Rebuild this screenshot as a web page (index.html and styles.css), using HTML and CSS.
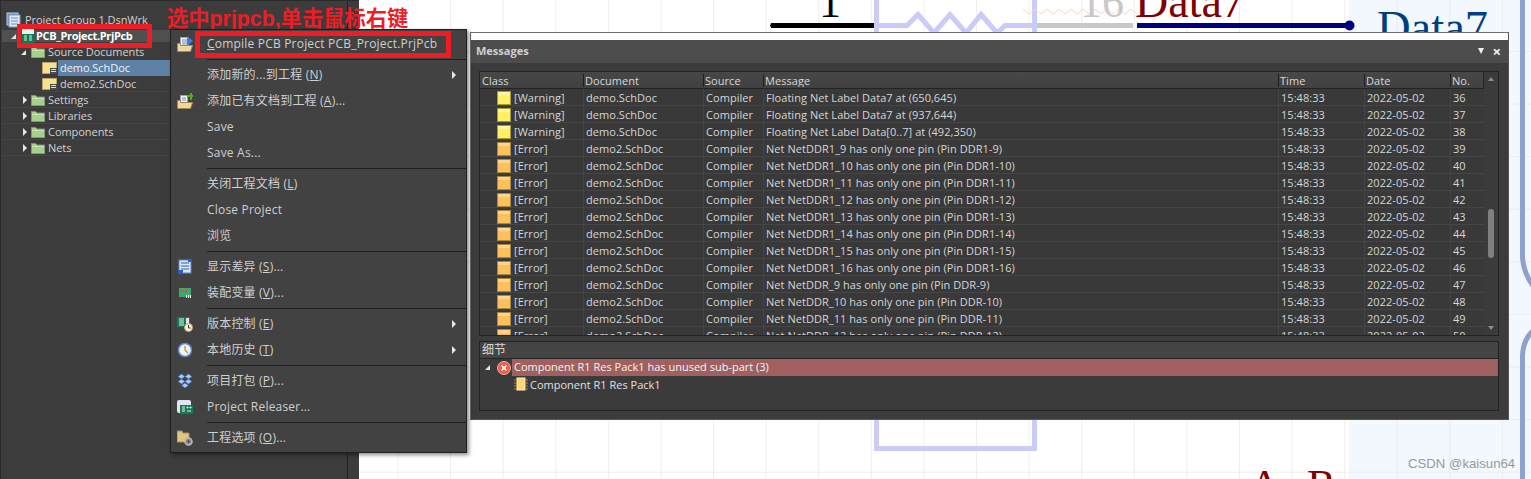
FILE: index.html
```html
<!DOCTYPE html>
<html lang="zh">
<head>
<meta charset="utf-8">
<title>Messages</title>
<link rel="stylesheet" href="styles.css">
</head>
<body>
<svg class="defs" width="0" height="0" aria-hidden="true">
  <defs>
    <symbol id="folder" viewBox="0 0 14 12">
      <path d="M0.5 11.5V1.5h4l1.5 1.5h7.5v8.5z" fill="#a7d28d" stroke="#7f9c72"/>
      <path d="M1 4h12v1H1z" fill="#c9e6b6"/>
    </symbol>
    <symbol id="doc" viewBox="0 0 15 12">
      <rect x="0.5" y="0.5" width="14" height="11" fill="#f8e08e" stroke="#b8a468"/>
      <rect x="8" y="6" width="7" height="6" fill="#4a4a4a"/>
      <path d="M9 7.5h5M9 9.5h5" stroke="#ddd"/>
    </symbol>
    <symbol id="warn" viewBox="0 0 14 14">
      <rect x="0.5" y="0.5" width="13" height="13" fill="#fff066" stroke="#a89a28"/>
      <rect x="1" y="1" width="12" height="3" fill="#fff7a0"/>
    </symbol>
    <symbol id="err" viewBox="0 0 14 14">
      <rect x="0.5" y="0.5" width="13" height="13" fill="#fcc05c" stroke="#a8843c"/>
      <rect x="1" y="1" width="12" height="3" fill="#fdd58c"/>
    </symbol>
  </defs>
</svg>

<div class="app">
  <aside class="panel">
    <div class="tree">
      <div class="node lv0">
        <svg class="ico-group" viewBox="0 0 16 16"><rect x="1" y="1" width="11" height="12" fill="#6f8fc0" stroke="#b9cbe6"/><rect x="3" y="3" width="11" height="12" fill="#dfe7f3" stroke="#7f9ac4"/><path d="M5 6h7M5 9h7M5 12h7" stroke="#6f8fc0"/></svg>
        <span class="label">Project Group 1.DsnWrk</span>
      </div>
      <div class="node lv1 project">
        <span class="tri-open"></span>
        <svg class="ico-pcb" viewBox="0 0 12 14"><rect x="0" y="0" width="12" height="14" fill="#eef3ee"/><rect x="0" y="5" width="12" height="9" fill="#0f7c55"/><path d="M2 7h3M2 9h3M2 11h3M7 7h3M7 9h3M7 11h3" stroke="#d8efd8"/></svg>
        <span class="label">PCB_Project.PrjPcb</span>
      </div>
      <div class="node lv2">
        <span class="tri-open"></span>
        <svg class="ico-folder"><use href="#folder"/></svg>
        <span class="label">Source Documents</span>
      </div>
      <div class="node lv3 active">
        <svg class="ico-doc"><use href="#doc"/></svg>
        <span class="label">demo.SchDoc</span>
      </div>
      <div class="node lv3 lined">
        <svg class="ico-doc"><use href="#doc"/></svg>
        <span class="label">demo2.SchDoc</span>
      </div>
      <div class="node lv2 lined">
        <span class="tri-closed"></span>
        <svg class="ico-folder"><use href="#folder"/></svg>
        <span class="label">Settings</span>
      </div>
      <div class="node lv2 lined">
        <span class="tri-closed"></span>
        <svg class="ico-folder"><use href="#folder"/></svg>
        <span class="label">Libraries</span>
      </div>
      <div class="node lv2 lined">
        <span class="tri-closed"></span>
        <svg class="ico-folder"><use href="#folder"/></svg>
        <span class="label">Components</span>
      </div>
      <div class="node lv2 lined">
        <span class="tri-closed"></span>
        <svg class="ico-folder"><use href="#folder"/></svg>
        <span class="label">Nets</span>
      </div>
    </div>
  </aside>

  <main class="canvas">
    <svg class="sheet" width="1172" height="479" viewBox="359 0 1172 479">
      <rect x="1349" y="0" width="182" height="479" fill="#e4eefc" opacity="0.45"/>
      <path d="M771 25.5H874" stroke="#000" stroke-width="5"/>
      <path d="M770 25.5h4M771.5 23.5v4" stroke="#000" stroke-width="1.5"/>
      <path d="M876.5 -5V448.5H1034.5V-5" fill="none" stroke="#c9cbf9" stroke-width="5"/>
      <path d="M879 25.5H907L918 14.5L934 33L950 14.5L966 33L981 14.5L997 33L1005 25.5H1032" fill="none" stroke="#c9cbf9" stroke-width="5"/>
      <path d="M1023 9l6 5 6-5 6 5 6-5 6 5 6-5 6 5 6-5 6 5 6-5 6 5 6-5 6 5 6-5 6 5 6-5 6 5 6-5 6 5" fill="none" stroke="#fbd6c4"/>
      <path d="M1037 25.5H1133" stroke="#c8c8c8" stroke-width="5"/>
      <path d="M1137 25.5H1350" stroke="#00007f" stroke-width="5"/>
      <circle cx="1349.5" cy="25.5" r="5" fill="#00007f"/>
      <text class="sch sch-black" x="819" y="17">1</text>
      <text class="sch sch-gray" x="1080" y="17">16</text>
      <text class="sch sch-red sch-data" x="1135" y="17">Data7</text>
      <text class="sch sch-blue" x="1377" y="43">Data7</text>
      <text class="sch sch-red" x="1249" y="500">A</text>
      <text class="sch sch-red" x="1307" y="500">R</text>
      <path d="M1522.5 -5V258Q1524 275 1536 290" fill="none" stroke="#8f9fd0" stroke-width="5"/>
      <path d="M1536 328Q1523 338 1522.5 356V484" fill="none" stroke="#8f9fd0" stroke-width="5"/>
    </svg>
  </main>

  <div class="hint">选中prjpcb,单击鼠标右键</div>
  <div class="redbox box-project"></div>
  <div class="watermark">CSDN @kaisun64</div>

  <nav class="menu">
    <div class="item">
      <svg class="mi" viewBox="0 0 16 16"><rect x="3.5" y="1.5" width="8" height="9" fill="#f4f6fa" stroke="#8fa3c4"/><path d="M5 4h5M5 6h5M5 8h5" stroke="#7a8aa8"/><path d="M10 0l6 5-6 5z" fill="#3c7fe0"/><path d="M0.5 15.5V7.5h3v2h12l-2 6z" fill="#f0d89c" stroke="#a68b55"/></svg>
      <span class="text"><u>C</u>ompile PCB Project PCB_Project.PrjPcb</span>
    </div>
    <div class="sep"></div>
    <div class="item">
      <span class="mi"></span>
      <span class="text">添加新的...到工程 (<u>N</u>)</span>
      <span class="sub"></span>
    </div>
    <div class="item">
      <svg class="mi" viewBox="0 0 16 16"><rect x="3.5" y="2.5" width="7" height="8" fill="#f4f6fa" stroke="#8fa3c4"/><path d="M5 5h4M5 7h4" stroke="#7a8aa8"/><path d="M0.5 15.5V7.5h3v2h12l-2 6z" fill="#f0d89c" stroke="#a68b55"/><path d="M10 2h3V0h2v2h1v2h-1v3h-2V4h-3z" fill="#4fb01f"/></svg>
      <span class="text">添加已有文档到工程 (<u>A</u>)...</span>
    </div>
    <div class="item"><span class="mi"></span><span class="text">Save</span></div>
    <div class="item"><span class="mi"></span><span class="text">Save As...</span></div>
    <div class="sep"></div>
    <div class="item"><span class="mi"></span><span class="text">关闭工程文档 (<u>L</u>)</span></div>
    <div class="item"><span class="mi"></span><span class="text">Close Project</span></div>
    <div class="item"><span class="mi"></span><span class="text">浏览</span></div>
    <div class="sep"></div>
    <div class="item">
      <svg class="mi" viewBox="0 0 16 16"><rect x="2" y="1" width="12" height="13" fill="#dbe6f6" stroke="#5b86c8"/><path d="M4 4h8M4 7h8M4 10h8" stroke="#2d5fb0"/><path d="M1 11h5v3H1z" fill="#1f62d0"/><path d="M11 0h4v3h-4z" fill="#1f62d0"/></svg>
      <span class="text">显示差异 (<u>S</u>)...</span>
    </div>
    <div class="item">
      <svg class="mi" viewBox="0 0 16 16"><rect x="2" y="3" width="12" height="9" fill="#3fa86c"/><path d="M4 5l2 2M6 5L4 7M8 5l2 2M10 5L8 7" stroke="#e04a3a"/><path d="M9 10h1v3H9zM11 10h1v3h-1zM13 10h1v3h-1z" fill="#e8f5e8"/></svg>
      <span class="text">装配变量 (<u>V</u>)...</span>
    </div>
    <div class="sep"></div>
    <div class="item">
      <svg class="mi" viewBox="0 0 16 16"><rect x="0" y="1" width="13" height="10" fill="#0f7c55"/><path d="M2 3h5M2 5h5M2 7h5M2 9h5" stroke="#e8f5e8"/><rect x="9" y="2" width="3" height="6" fill="#e8e8e8"/><circle cx="11.5" cy="11.5" r="4" fill="#f2f6fc" stroke="#d49b35"/><path d="M11.5 9v3h2" stroke="#333" fill="none"/></svg>
      <span class="text">版本控制 (<u>E</u>)</span>
      <span class="sub"></span>
    </div>
    <div class="item">
      <svg class="mi" viewBox="0 0 16 16"><circle cx="8" cy="8" r="6.5" fill="#eef2fa" stroke="#5f8ad0" stroke-width="1.5"/><path d="M8 4v4l3 3" stroke="#d49b35" stroke-width="1.5" fill="none"/></svg>
      <span class="text">本地历史 (<u>T</u>)</span>
      <span class="sub"></span>
    </div>
    <div class="sep"></div>
    <div class="item">
      <svg class="mi" viewBox="0 0 16 16"><path d="M4.5 1L1 3.5 4.5 6 8 3.5zM11.5 1L8 3.5 11.5 6 15 3.5zM4.5 6L1 8.5 4.5 11 8 8.5zM11.5 6L8 8.5 11.5 11 15 8.5zM8 10l-3.5 2.5L8 15l3.5-2.5z" fill="#a9c8f2" stroke="#2c66cc" stroke-width="0.6"/></svg>
      <span class="text">项目打包 (<u>P</u>)...</span>
    </div>
    <div class="item">
      <svg class="mi" viewBox="0 0 16 16"><rect x="0" y="1" width="14" height="13" rx="2" fill="#dfe6f2"/><rect x="3" y="6" width="13" height="9" fill="#0f7c55"/><path d="M5 8h3M5 10h3M5 12h3M10 8h1v1h-1zM13 8h1v1h-1zM10 12h4" stroke="#e8f5e8"/></svg>
      <span class="text">Project Releaser...</span>
    </div>
    <div class="sep"></div>
    <div class="item">
      <svg class="mi" viewBox="0 0 16 16"><path d="M0 12V1h5l1 2h6v9z" fill="#e3c583" stroke="#a68b55"/><circle cx="11.5" cy="11.5" r="3.5" fill="#888" stroke="#bbb" stroke-width="1.5"/><circle cx="11.5" cy="11.5" r="1" fill="#333"/></svg>
      <span class="text">工程选项 (<u>O</u>)...</span>
    </div>
    <div class="redbox box-compile"></div>
  </nav>

  <section class="messages">
    <div class="whitebar"></div>
    <header class="title">
      <span class="title-text">Messages</span>
      <span class="title-drop"></span>
      <span class="title-close">×</span>
    </header>
    <div class="body">
      <div class="list">
        <div class="table">
          <div class="row head">
            <span class="cell c-class">Class</span><span class="cell">Document</span><span class="cell">Source</span><span class="cell">Message</span><span class="cell">Time</span><span class="cell">Date</span><span class="cell">No.</span>
          </div>
          <div class="row"><span class="cell kind"><svg class="flag"><use href="#warn"/></svg>[Warning]</span><span class="cell">demo.SchDoc</span><span class="cell">Compiler</span><span class="cell">Floating Net Label Data7 at (650,645)</span><span class="cell">15:48:33</span><span class="cell">2022-05-02</span><span class="cell">36</span></div>
          <div class="row"><span class="cell kind"><svg class="flag"><use href="#warn"/></svg>[Warning]</span><span class="cell">demo.SchDoc</span><span class="cell">Compiler</span><span class="cell">Floating Net Label Data7 at (937,644)</span><span class="cell">15:48:33</span><span class="cell">2022-05-02</span><span class="cell">37</span></div>
          <div class="row"><span class="cell kind"><svg class="flag"><use href="#warn"/></svg>[Warning]</span><span class="cell">demo.SchDoc</span><span class="cell">Compiler</span><span class="cell">Floating Net Label Data[0..7] at (492,350)</span><span class="cell">15:48:33</span><span class="cell">2022-05-02</span><span class="cell">38</span></div>
          <div class="row"><span class="cell kind"><svg class="flag"><use href="#err"/></svg>[Error]</span><span class="cell">demo2.SchDoc</span><span class="cell">Compiler</span><span class="cell">Net NetDDR1_9 has only one pin (Pin DDR1-9)</span><span class="cell">15:48:33</span><span class="cell">2022-05-02</span><span class="cell">39</span></div>
          <div class="row"><span class="cell kind"><svg class="flag"><use href="#err"/></svg>[Error]</span><span class="cell">demo2.SchDoc</span><span class="cell">Compiler</span><span class="cell">Net NetDDR1_10 has only one pin (Pin DDR1-10)</span><span class="cell">15:48:33</span><span class="cell">2022-05-02</span><span class="cell">40</span></div>
          <div class="row"><span class="cell kind"><svg class="flag"><use href="#err"/></svg>[Error]</span><span class="cell">demo2.SchDoc</span><span class="cell">Compiler</span><span class="cell">Net NetDDR1_11 has only one pin (Pin DDR1-11)</span><span class="cell">15:48:33</span><span class="cell">2022-05-02</span><span class="cell">41</span></div>
          <div class="row"><span class="cell kind"><svg class="flag"><use href="#err"/></svg>[Error]</span><span class="cell">demo2.SchDoc</span><span class="cell">Compiler</span><span class="cell">Net NetDDR1_12 has only one pin (Pin DDR1-12)</span><span class="cell">15:48:33</span><span class="cell">2022-05-02</span><span class="cell">42</span></div>
          <div class="row"><span class="cell kind"><svg class="flag"><use href="#err"/></svg>[Error]</span><span class="cell">demo2.SchDoc</span><span class="cell">Compiler</span><span class="cell">Net NetDDR1_13 has only one pin (Pin DDR1-13)</span><span class="cell">15:48:33</span><span class="cell">2022-05-02</span><span class="cell">43</span></div>
          <div class="row"><span class="cell kind"><svg class="flag"><use href="#err"/></svg>[Error]</span><span class="cell">demo2.SchDoc</span><span class="cell">Compiler</span><span class="cell">Net NetDDR1_14 has only one pin (Pin DDR1-14)</span><span class="cell">15:48:33</span><span class="cell">2022-05-02</span><span class="cell">44</span></div>
          <div class="row"><span class="cell kind"><svg class="flag"><use href="#err"/></svg>[Error]</span><span class="cell">demo2.SchDoc</span><span class="cell">Compiler</span><span class="cell">Net NetDDR1_15 has only one pin (Pin DDR1-15)</span><span class="cell">15:48:33</span><span class="cell">2022-05-02</span><span class="cell">45</span></div>
          <div class="row"><span class="cell kind"><svg class="flag"><use href="#err"/></svg>[Error]</span><span class="cell">demo2.SchDoc</span><span class="cell">Compiler</span><span class="cell">Net NetDDR1_16 has only one pin (Pin DDR1-16)</span><span class="cell">15:48:33</span><span class="cell">2022-05-02</span><span class="cell">46</span></div>
          <div class="row"><span class="cell kind"><svg class="flag"><use href="#err"/></svg>[Error]</span><span class="cell">demo2.SchDoc</span><span class="cell">Compiler</span><span class="cell">Net NetDDR_9 has only one pin (Pin DDR-9)</span><span class="cell">15:48:33</span><span class="cell">2022-05-02</span><span class="cell">47</span></div>
          <div class="row"><span class="cell kind"><svg class="flag"><use href="#err"/></svg>[Error]</span><span class="cell">demo2.SchDoc</span><span class="cell">Compiler</span><span class="cell">Net NetDDR_10 has only one pin (Pin DDR-10)</span><span class="cell">15:48:33</span><span class="cell">2022-05-02</span><span class="cell">48</span></div>
          <div class="row"><span class="cell kind"><svg class="flag"><use href="#err"/></svg>[Error]</span><span class="cell">demo2.SchDoc</span><span class="cell">Compiler</span><span class="cell">Net NetDDR_11 has only one pin (Pin DDR-11)</span><span class="cell">15:48:33</span><span class="cell">2022-05-02</span><span class="cell">49</span></div>
          <div class="row"><span class="cell kind"><svg class="flag"><use href="#err"/></svg>[Error]</span><span class="cell">demo2.SchDoc</span><span class="cell">Compiler</span><span class="cell">Net NetDDR_12 has only one pin (Pin DDR-12)</span><span class="cell">15:48:33</span><span class="cell">2022-05-02</span><span class="cell">50</span></div>
        </div>
        <div class="scrollbar">
          <span class="sb-up"></span>
          <span class="sb-thumb"></span>
          <span class="sb-down"></span>
        </div>
      </div>
      <div class="details">
        <div class="details-head">细节</div>
        <div class="d-row d-parent">
          <span class="tri-open d-tri"></span>
          <svg class="d-err" viewBox="0 0 14 14"><circle cx="7" cy="7" r="6.5" fill="#e8604c" stroke="#f2b0a4"/><path d="M4.5 4.5l5 5M9.5 4.5l-5 5" stroke="#fff" stroke-width="1.5"/></svg>
          <span class="d-sel">Component R1 Res Pack1 has unused sub-part (3)</span>
        </div>
        <div class="d-row d-child">
          <svg class="d-chip" viewBox="0 0 14 14"><rect x="3" y="1" width="8" height="12" fill="#fbd777" stroke="#fff3c0"/><path d="M0 3h3M0 6h3M0 9h3M0 12h3M11 3h3M11 6h3M11 9h3M11 12h3" stroke="#b08a3c"/></svg>
          <span class="d-text">Component R1 Res Pack1</span>
        </div>
      </div>
    </div>
  </section>
</div>
</body>
</html>
```
FILE: styles.css
```css
* { box-sizing: border-box; }
html, body { margin: 0; padding: 0; }
body {
  font-family: "Open Sans", "Noto Sans CJK SC", sans-serif;
  font-size: 11px;
  color: #d8d8d8;
  background: #fff;
}
.defs { position: absolute; }
.app {
  position: relative;
  display: flex;
  width: 1531px;
  height: 479px;
  overflow: hidden;
}

/* left project panel */
.panel {
  flex: 0 0 359px;
  height: 479px;
  background: #3c3c3c;
  padding: 1px 11px 0 1px;
  border-left: 1px solid #2a2a2a;
  box-shadow: inset 0 1px 0 #2a2a2a;
  position: relative;
}
.tree {
  height: 100%;
  padding-top: 11px;
  border-right: 1px solid #232323;
}
.node {
  display: flex;
  align-items: center;
  height: 16px;
  line-height: 16px;
  white-space: nowrap;
  position: relative;
}
.node .label { color: #d2d2d2; letter-spacing: -0.05px; }
.lv0 { padding-left: 4px; }
.lv1 { padding-left: 9px; }
.lv2 { padding-left: 19px; }
.lv3 { padding-left: 40px; }
.lined { box-shadow: inset 0 -1px 0 #454545; }
.project { background: linear-gradient(#3c3c3c 2px, #505050 2px, #505050 14px, #3c3c3c 14px); }
.project .label { color: #fff; font-weight: 700; margin-left: 2px; letter-spacing: -0.35px; }
.active .label {
  background: #5d81a5;
  color: #f2f2f2;
  width: 112px;
  height: 16px;
  padding-left: 2px;
}
.tri-open {
  width: 0; height: 0;
  border-style: solid;
  border-width: 0 0 5px 5px;
  border-color: transparent transparent #e6e6e6 transparent;
  margin-right: 5px;
}
.project .tri-open { margin-right: 6px; }
.tri-closed {
  width: 0; height: 0;
  border-style: solid;
  border-width: 4px 0 4px 4px;
  border-color: transparent transparent transparent #e6e6e6;
  margin: 0 4px 0 2px;
}
.ico-group { width: 16px; height: 16px; margin-right: 3px; }
.ico-pcb { width: 12px; height: 14px; }
.ico-folder { width: 14px; height: 12px; margin-right: 3px; }
.ico-doc { width: 15px; height: 12px; }
.lv3 .label { margin-left: 3px; }
.lv3.active .label { margin-left: 1px; }

/* schematic canvas */
.canvas {
  flex: 1;
  position: relative;
  background-color: #fff;
  background-image:
    linear-gradient(to right, #efeee9 1px, transparent 1px),
    linear-gradient(to bottom, #efeee9 1px, transparent 1px);
  background-size: 52.6px 52.6px;
  background-position: 38.5px 51px;
}
.sheet { position: absolute; left: 0; top: 0; display: block; }
.sch { font-family: "Liberation Serif", serif; font-size: 44px; }
.sch-black { fill: #000; }
.sch-gray { fill: #c8c8c8; }
.sch-red { fill: #800000; }
.sch-data { font-size: 46px; }
.sch-blue { fill: #004080; font-size: 46.5px; }

/* annotations */
.hint {
  position: absolute;
  left: 167px;
  top: 4px;
  font-family: "Liberation Sans", "Noto Sans CJK SC", sans-serif;
  font-size: 21.3px;
  line-height: 30px;
  font-weight: 700;
  color: #ee1c25;
  white-space: nowrap;
  z-index: 4;
}
.redbox { position: absolute; border-style: solid; border-color: #ee1c25; z-index: 5; }
.box-project { left: 17px; top: 24px; width: 135px; height: 24px; border-width: 5px 5px 5px 4px; }
.box-compile { left: 24px; top: 1px; width: 256px; height: 27px; border-width: 5px; }
.watermark {
  position: absolute;
  left: 1408px;
  top: 456px;
  font-family: "Liberation Sans", sans-serif;
  font-size: 13.2px;
  line-height: 16px;
  color: #9a9a9a;
  z-index: 3;
}

/* context menu */
.menu {
  position: absolute;
  left: 170px;
  top: 29px;
  width: 297px;
  height: 424px;
  padding: 1px 0 0;
  background: #424242;
  border: 1px solid #1f1f1f;
  box-shadow: 2px 2px 4px rgba(0, 0, 0, 0.45);
  z-index: 4;
  font-size: 12px;
}
.item {
  display: flex;
  align-items: center;
  height: 26px;
  padding-left: 6px;
  position: relative;
  white-space: nowrap;
}
.mi { display: block; flex: 0 0 16px; width: 16px; height: 16px; margin-right: 14px; }
.text { color: #cfcfcf; letter-spacing: 0.2px; margin-top: -2px; }
.sep { height: 5px; margin-left: 36px; position: relative; }
.sep::after {
  content: "";
  display: block;
  position: relative;
  top: 2px;
  height: 1px;
  background: #202020;
}
.sub {
  position: absolute;
  left: 281px;
  top: 9px;
  width: 0; height: 0;
  border-style: solid;
  border-width: 4px 0 4px 4px;
  border-color: transparent transparent transparent #e6e6e6;
}

/* messages panel */
.messages {
  position: absolute;
  left: 470px;
  top: 32px;
  width: 1039px;
  height: 388px;
  display: flex;
  flex-direction: column;
  background: #3c3c3c;
  border-top: 1px solid #707070;
  border-left: 1px solid #707070;
  border-right: 1px solid #555;
  border-bottom: 1px solid #555;
  z-index: 3;
}
.whitebar { flex: 0 0 7px; background: #fff; }
.title {
  flex: 0 0 23px;
  display: flex;
  align-items: center;
  padding: 0 7px 2px 5px;
  background: #4d4d4d;
}
.title-text { flex: 1; font-weight: 700; color: #d0d0d0; font-size: 11px; }
.title-drop {
  width: 0; height: 0;
  margin-right: 8px;
  border-style: solid;
  border-width: 6px 3.5px 0 3.5px;
  border-color: #f0f0f0 transparent transparent transparent;
}
.title-close { font-size: 15px; line-height: 14px; font-weight: 700; color: #f0f0f0; }
.body {
  flex: 1;
  display: flex;
  flex-direction: column;
  padding: 8px 9px 8px 8px;
  min-height: 0;
}
.list {
  flex: 0 0 265px;
  display: flex;
  overflow: hidden;
  border: 1px solid #232323;
  background: #393939;
}
.table { flex: 0 0 1004px; overflow: hidden; }
.row {
  display: grid;
  grid-template-columns: 103px 120px 60px 515px 86px 86px 34px;
  height: 17px;
  line-height: 16px;
  white-space: nowrap;
  border-bottom: 1px solid #454545;
}
.cell {
  padding: 1px 0 0 2px;
  overflow: hidden;
  color: #d6d6d6;
  letter-spacing: 0.05px;
  border-left: 1px solid #444;
}
.cell:first-child { border-left: 0; }
.head {
  background: linear-gradient(#474747, #414141);
  border-bottom: 1px solid #232323;
  border-right: 1px solid #232323;
}
.head .cell {
  border-left: 1px solid #1f1f1f;
  padding: 0 0 0 1px;
  height: 13px;
  margin-top: 2px;
  line-height: 13px;
  color: #d8d8d8;
}
.head .cell:first-child { border-left: 0; padding-left: 2px; }
.kind { display: flex; align-items: center; padding-left: 17px; }
.flag { width: 14px; height: 14px; margin-right: 3px; flex: 0 0 14px; }
.scrollbar {
  flex: 1;
  position: relative;
  background: #3b3b3b;
}
.sb-up, .sb-down { position: absolute; left: 4px; width: 0; height: 0; border-style: solid; }
.sb-up { top: 5px; border-width: 0 3.5px 4px 3.5px; border-color: transparent transparent #8c8c8c transparent; }
.sb-down { bottom: 5px; border-width: 4px 3.5px 0 3.5px; border-color: #8c8c8c transparent transparent transparent; }
.sb-thumb {
  position: absolute;
  top: 137px;
  left: 4px;
  width: 6px;
  height: 49px;
  border-radius: 3px;
  background: #808080;
}
.details {
  flex: 0 0 70px;
  margin-top: 5px;
  border: 1px solid #232323;
  background: #3b3b3b;
}
.details-head {
  height: 17px;
  line-height: 16px;
  padding-left: 2px;
  font-size: 12px;
  background: #444;
  border-bottom: 1px solid #232323;
  color: #d8d8d8;
}
.d-row {
  display: flex;
  align-items: center;
  height: 16px;
  white-space: nowrap;
}
.d-parent { height: 17px; }
.d-tri { margin: 0 5px 0 5px; }
.d-err { width: 14px; height: 14px; margin: 0 1px 0 2px; flex: 0 0 14px; }
.d-sel {
  flex: 1;
  height: 17px;
  line-height: 16px;
  padding-left: 2px;
  background: #a06060;
  color: #f4f4f4;
}
.d-child { padding-left: 34px; }
.d-chip { width: 14px; height: 14px; margin-right: 2px; }
.d-text { color: #e0e0e0; }
```
